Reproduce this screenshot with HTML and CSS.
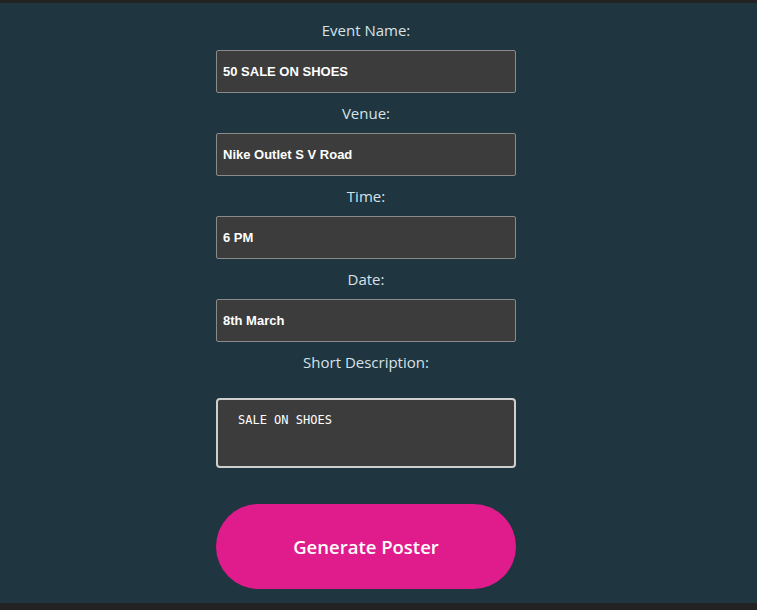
FILE: index.html
```html
<!DOCTYPE html>
<html>
<head>
<meta charset="utf-8">
<link rel="stylesheet" href="styles.css">
</head>
<body>
<div class="topbar"></div>
<main class="main">
  <form class="form">
    <label class="label">Event Name:</label>
    <input class="field" type="text" value="50 SALE ON SHOES">
    <label class="label">Venue:</label>
    <input class="field" type="text" value="Nike Outlet S V Road">
    <label class="label">Time:</label>
    <input class="field" type="text" value="6 PM">
    <label class="label">Date:</label>
    <input class="field" type="text" value="8th March">
    <label class="label">Short Description:</label>
    <textarea class="desc">SALE ON SHOES</textarea>
    <button class="btn" type="button">Generate Poster</button>
  </form>
</main>
<div class="bottombar"></div>
</body>
</html>
```

FILE: styles.css
```css
html, body {
  margin: 0;
  padding: 0;
  background: #222222;
  height: 100%;
  overflow: hidden;
}
.topbar {
  height: 3px;
  background: #232323;
}
.main {
  background: #1f3540;
  height: 600px;
  box-sizing: border-box;
  padding-top: 16px;
}
.form {
  width: 300px;
  margin-left: 216px;
  display: flex;
  flex-direction: column;
}
.label {
  display: block;
  text-align: center;
  font-family: "Open Sans", "Noto Sans", sans-serif;
  font-size: 15px;
  line-height: 22px;
  color: #d6e2e8;
  margin-bottom: 9px;
}
.field {
  box-sizing: border-box;
  height: 43px;
  width: 300px;
  margin: 0 0 9px 0;
  padding: 0 6px;
  background: #3c3c3c;
  border: 1px solid #8a8a8a;
  border-radius: 2px;
  color: #ffffff;
  font-family: "Liberation Sans", Arial, sans-serif;
  font-size: 13px;
  font-weight: bold;
  outline: none;
}
.desc {
  box-sizing: border-box;
  margin: 16px 0 0 0;
  width: 300px;
  height: 70px;
  padding: 13px 20px;
  background: #3c3c3c;
  border: 2px solid #cfcfcf;
  border-radius: 4px;
  color: #ffffff;
  font-family: "DejaVu Sans Mono", "Liberation Mono", monospace;
  font-size: 12px;
  line-height: 14px;
  resize: none;
  outline: none;
}
.btn {
  margin-top: 36px;
  width: 300px;
  height: 85px;
  border: none;
  border-radius: 43px;
  background: #e01b8b;
  color: #ffffff;
  font-family: "Open Sans", "Noto Sans", sans-serif;
  font-size: 18.5px;
  font-weight: 600;
}
```
